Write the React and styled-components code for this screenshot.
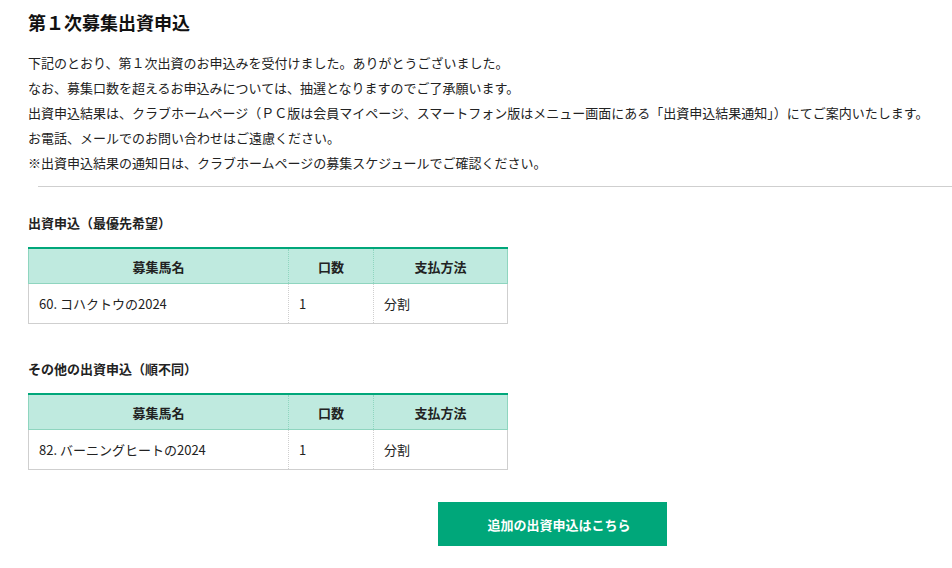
import styled, { createGlobalStyle } from 'styled-components';

const GlobalStyle = createGlobalStyle`
  body {
    margin: 0;
    background: #fff;
    color: #222;
    font-family: "Noto Sans CJK JP", "Noto Sans", sans-serif;
  }
`;

const Page = styled.div`
  padding: 9px 0 0 28px;
`;

const Title = styled.h1`
  margin: 0;
  font-size: 18px;
  line-height: 27px;
  font-weight: 700;
  color: #111;
`;

const Notice = styled.div`
  margin-top: 14px;
  font-size: 13px;
  line-height: 25px;
  p {
    margin: 0;
    white-space: nowrap;
  }
`;

const Rule = styled.hr`
  margin: 11px 0 0 10px;
  border: 0;
  border-top: 1px solid #cfcfcf;
`;

const SectionTitle = styled.h2`
  margin: ${(p) => p.$top}px 0 14px;
  font-size: 13px;
  line-height: 20px;
  font-weight: 700;
`;

const Table = styled.table`
  width: 479px;
  table-layout: fixed;
  border-collapse: collapse;
  font-size: 13px;
  border-top: 2px solid #00a77a;
`;

const HeadCell = styled.th`
  height: 34px;
  padding: 0;
  background: #bfeadf;
  font-weight: 700;
  text-align: center;
  border-bottom: 1px solid #8fd5bf;
  border-left: 1px ${(p) => (p.$first ? 'solid' : 'dotted')} #8fd5bf;
  &:last-child {
    border-right: 1px solid #8fd5bf;
  }
`;

const Cell = styled.td`
  height: 39px;
  padding: 0 10px;
  border-bottom: 1px solid #cfcfcf;
  border-left: 1px ${(p) => (p.$first ? 'solid' : 'dotted')} #cfcfcf;
  &:last-child {
    border-right: 1px solid #cfcfcf;
  }
`;

const ButtonRow = styled.div`
  margin-top: 32px;
  padding-left: 410px;
`;

const Button = styled.button`
  width: 229px;
  height: 44px;
  border: 0;
  padding: 0 0 0 13px;
  background: #00a77a;
  color: #fff;
  font-family: inherit;
  font-size: 13px;
  font-weight: 700;
  cursor: pointer;
`;

const columns = [
  { label: '募集馬名', width: 260 },
  { label: '口数', width: 85 },
  { label: '支払方法', width: 134 },
];

function OrderTable({ rows }) {
  return (
    <Table>
      <colgroup>
        {columns.map((c) => (
          <col key={c.label} style={{ width: c.width }} />
        ))}
      </colgroup>
      <thead>
        <tr>
          {columns.map((c, i) => (
            <HeadCell key={c.label} $first={i === 0}>
              {c.label}
            </HeadCell>
          ))}
        </tr>
      </thead>
      <tbody>
        {rows.map((r) => (
          <tr key={r.name}>
            <Cell $first>{r.name}</Cell>
            <Cell>{r.count}</Cell>
            <Cell>{r.payment}</Cell>
          </tr>
        ))}
      </tbody>
    </Table>
  );
}

export default function App() {
  return (
    <Page>
      <GlobalStyle />
      <Title>第１次募集出資申込</Title>
      <Notice>
        <p>下記のとおり、第１次出資のお申込みを受付けました。ありがとうございました。</p>
        <p>なお、募集口数を超えるお申込みについては、抽選となりますのでご了承願います。</p>
        <p>
          出資申込結果は、クラブホームページ（ＰＣ版は会員マイページ、スマートフォン版はメニュー画面にある「出資申込結果通知」）にてご案内いたします。
        </p>
        <p>お電話、メールでのお問い合わせはご遠慮ください。</p>
        <p>※出資申込結果の通知日は、クラブホームページの募集スケジュールでご確認ください。</p>
      </Notice>
      <Rule />

      <SectionTitle $top={26}>出資申込（最優先希望）</SectionTitle>
      <OrderTable rows={[{ name: '60. コハクトウの2024', count: 1, payment: '分割' }]} />

      <SectionTitle $top={35}>その他の出資申込（順不同）</SectionTitle>
      <OrderTable rows={[{ name: '82. バーニングヒートの2024', count: 1, payment: '分割' }]} />

      <ButtonRow>
        <Button>追加の出資申込はこちら</Button>
      </ButtonRow>
    </Page>
  );
}
